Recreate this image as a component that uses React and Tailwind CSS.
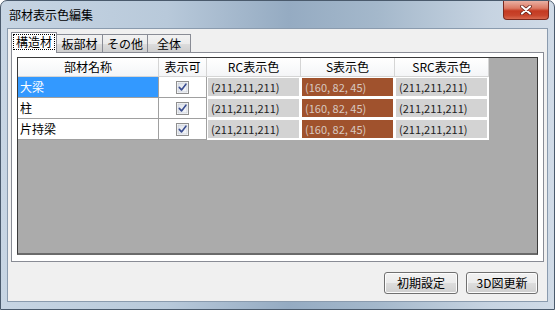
import React from "react";

function Check() {
  return (
    <svg width="13" height="13" viewBox="0 0 13 13">
      <defs>
        <linearGradient id="cbg" x1="0" y1="0" x2="1" y2="1">
          <stop offset="0" stopColor="#dfe3ea" />
          <stop offset="1" stopColor="#f7f8fa" />
        </linearGradient>
      </defs>
      <rect x="0.5" y="0.5" width="12" height="12" fill="#ffffff" stroke="#8f8f8f" />
      <rect x="2" y="2" width="9" height="9" fill="url(#cbg)" stroke="#b9c0cc" strokeWidth="0.6" />
      <path d="M3.3 6.4 L5.5 8.9 L9.9 3.2" fill="none" stroke="#3a4d91" strokeWidth="1.6" strokeLinecap="round" strokeLinejoin="round" />
    </svg>
  );
}

function ColorCell({ bg, fg, text }) {
  return (
    <div className="w-[94px] h-full bg-white pl-[1px] pr-[2px] pt-[1px] pb-[2px]">
      <div className={`h-full flex items-center pl-[3px] text-[11px] ${bg} ${fg}`}>{text}</div>
    </div>
  );
}

export default function App() {
  const rows = [
    { name: "大梁", sel: true },
    { name: "柱" },
    { name: "片持梁" },
  ];
  const headers = [
    { t: "部材名称", w: "w-[141px]" },
    { t: "表示可", w: "w-[48px]" },
    { t: "RC表示色", w: "w-[94px]" },
    { t: "S表示色", w: "w-[94px]" },
    { t: "SRC表示色", w: "w-[94px]" },
  ];
  return (
    <div className="w-[555px] h-[310px] overflow-hidden bg-white font-['Noto_Sans_CJK_JP','Noto_Sans',sans-serif] text-black leading-none">
      <div className="relative w-[555px] h-[310px] rounded-t-[7px] border border-[#4a5a6c] bg-[linear-gradient(90deg,#c7d5e3_0%,#b8c9da_30%,#95abc2_52%,#a4b8cb_68%,#c6d3e1_88%,#d0dbe7_100%)] flex flex-col">
        <div className="h-[27px] pl-[8px] flex items-center text-[12px] text-black">部材表示色編集</div>
        <div className="absolute top-0 right-[5px] w-[46px] h-[19px] rounded-b-[4px] border border-t-0 border-[#7a2a1f] bg-[linear-gradient(180deg,#eab0a2_0%,#dc7a64_40%,#c43a22_55%,#c8452c_80%,#d8694f_100%)] flex items-center justify-center">
          <svg width="12" height="10" viewBox="0 0 12 10">
            <path d="M2 1.5 L10 8.5 M10 1.5 L2 8.5" stroke="#5a1a12" strokeWidth="3.6" strokeLinecap="round" />
            <path d="M2 1.5 L10 8.5 M10 1.5 L2 8.5" stroke="#ffffff" strokeWidth="2.2" strokeLinecap="round" />
          </svg>
        </div>
        <div className="mx-[6px] h-[274px] border border-[#8a9bae] bg-[#f0f0f0] flex flex-col">
          <div className="h-[23px] pt-[3px] pl-[3px] flex items-end text-[12px]">
            <div className="relative z-10 h-[21px] w-[46px] -mb-[1px] border border-b-0 border-[#898c95] bg-white flex items-start justify-center pt-[1px]">
              <div className="border border-dotted border-black px-[2px] h-[16px] flex items-center">構造材</div>
            </div>
            <div className="h-[18px] w-[46px] border border-b-0 border-l-0 border-[#898c95] bg-[linear-gradient(180deg,#f2f2f2_0%,#ebebeb_50%,#dddddd_50%,#cfcfcf_100%)] flex items-center justify-center">板部材</div>
            <div className="h-[18px] w-[45px] border border-b-0 border-l-0 border-[#898c95] bg-[linear-gradient(180deg,#f2f2f2_0%,#ebebeb_50%,#dddddd_50%,#cfcfcf_100%)] flex items-center justify-center">その他</div>
            <div className="h-[18px] w-[43px] border border-b-0 border-l-0 border-[#898c95] bg-[linear-gradient(180deg,#f2f2f2_0%,#ebebeb_50%,#dddddd_50%,#cfcfcf_100%)] flex items-center justify-center">全体</div>
          </div>
          <div className="ml-[3px] w-[533px] h-[210px] border border-[#898c95] bg-white pt-[4px] pl-[5px]">
            <div className="w-[521px] h-[198px] border border-[#3a3a3a] border-b-2 border-b-[#6a6a6a] bg-[#ababab] flex flex-col">
              <div className="flex h-[19px] text-[12px]">
                {headers.map((h) => (
                  <div key={h.t} className={`${h.w} h-full border-r border-b border-[#d5d5d5] bg-[linear-gradient(180deg,#ffffff_0%,#f4f5f7_100%)] flex items-center justify-center`}>{h.t}</div>
                ))}
              </div>
              {rows.map((r) => (
                <div key={r.name} className="flex h-[21px] text-[12px]">
                  <div className={`w-[141px] h-full border-r border-b border-[#a0a0a0] flex items-center pl-[2px] ${r.sel ? "bg-[#3399ff] text-white" : "bg-white text-black"}`}>{r.name}</div>
                  <div className="w-[48px] h-full border-r border-b border-[#a0a0a0] bg-white flex items-center justify-center">
                    <Check />
                  </div>
                  <ColorCell bg="bg-[#d3d3d3]" fg="text-[#222222]" text="(211,211,211)" />
                  <ColorCell bg="bg-[#a0522d]" fg="text-[#d8c9c0]" text="(160, 82, 45)" />
                  <ColorCell bg="bg-[#d3d3d3]" fg="text-[#222222]" text="(211,211,211)" />
                </div>
              ))}
            </div>
          </div>
          <div className="mt-[10px] pr-[9px] flex justify-end gap-[8px] text-[12px]">
            <div className="w-[74px] h-[22px] rounded-[3px] border border-[#707070] bg-[linear-gradient(180deg,#f2f2f2_0%,#ebebeb_50%,#dddddd_50%,#cfcfcf_100%)] shadow-[inset_0_0_0_1px_#fcfcfc] flex items-center justify-center">初期設定</div>
            <div className="w-[72px] h-[22px] rounded-[3px] border border-[#707070] bg-[linear-gradient(180deg,#f2f2f2_0%,#ebebeb_50%,#dddddd_50%,#cfcfcf_100%)] shadow-[inset_0_0_0_1px_#fcfcfc] flex items-center justify-center">3D図更新</div>
          </div>
        </div>
      </div>
    </div>
  );
}
